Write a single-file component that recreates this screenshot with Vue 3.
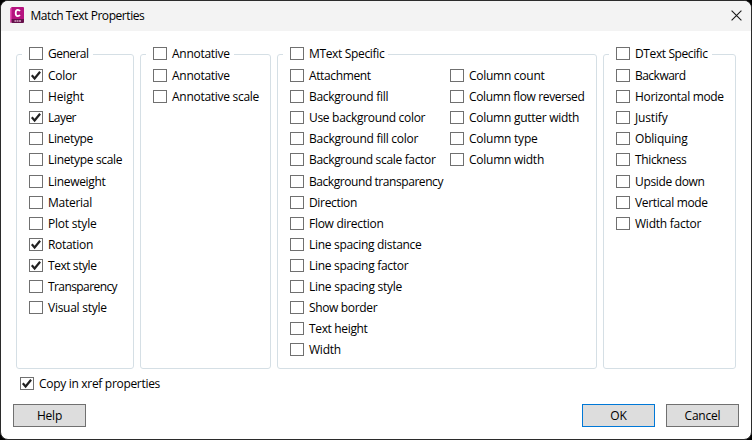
<script setup>
import { reactive } from 'vue'

// Each entry is [name, label width in px, checked]
const make = (rows) => rows.map(([name, width, checked = false]) => ({ name, width, checked }))

const groups = reactive([
  {
    id: 'general',
    title: 'General',
    width: 40.5,
    checked: false,
    columns: [
      make([
        ['Color', 28.5, true],
        ['Height', 36],
        ['Layer', 28, true],
        ['Linetype', 45],
        ['Linetype scale', 74.2],
        ['Lineweight', 57.5],
        ['Material', 44],
        ['Plot style', 48.5],
        ['Rotation', 45, true],
        ['Text style', 48.5, true],
        ['Transparency', 69],
        ['Visual style', 58.7],
      ]),
    ],
  },
  {
    id: 'annotative',
    title: 'Annotative',
    width: 57.7,
    checked: false,
    columns: [make([['Annotative', 57.7], ['Annotative scale', 87]])],
  },
  {
    id: 'mtext',
    title: 'MText Specific',
    width: 75.3,
    checked: false,
    columns: [
      make([
        ['Attachment', 61.7],
        ['Background fill', 79.3],
        ['Use background color', 116.2],
        ['Background fill color', 109.2],
        ['Background scale factor', 126.5],
        ['Background transparency', 134],
        ['Direction', 48],
        ['Flow direction', 74.5],
        ['Line spacing distance', 112.5],
        ['Line spacing factor', 99.3],
        ['Line spacing style', 93],
        ['Show border', 68.2],
        ['Text height', 58.5],
        ['Width', 32],
      ]),
      make([
        ['Column count', 75.5],
        ['Column flow reversed', 115.5],
        ['Column gutter width', 110.2],
        ['Column type', 68.5],
        ['Column width', 75],
      ]),
    ],
  },
  {
    id: 'dtext',
    title: 'DText Specific',
    width: 72.5,
    checked: false,
    columns: [
      make([
        ['Backward', 50.5],
        ['Horizontal mode', 88.7],
        ['Justify', 32.5],
        ['Obliquing', 52.5],
        ['Thickness', 51.5],
        ['Upside down', 69.5],
        ['Vertical mode', 72.7],
        ['Width factor', 66.2],
      ]),
    ],
  },
])
const xref = reactive({ name: 'Copy in xref properties', width: 121, checked: true })

// Tracks a label so that its text fills the given width
const vFit = {
  mounted(el, { value }) {
    el.style.letterSpacing = '0px'
    const natural = el.getBoundingClientRect().width
    el.style.letterSpacing = `${(value - natural) / el.textContent.length}px`
  },
}
</script>

<template>
  <div class="dialog">
    <header class="titlebar">
      <svg class="logo" width="15" height="17" viewBox="0 0 15 17">
        <path d="M0 1.5 2 0v15L0 16z" fill="#e455b4" />
        <path d="M1.5 0H13q1 0 1 1v11H1.5z" fill="#b5127f" />
        <path d="M1.5 12H14v3q0 1-1 1H1.5z" fill="#65104b" />
        <path d="M9.9 4.1Q9.2 2.9 7.8 2.9 5.7 2.9 5.7 6t2.1 3.1q1.4 0 2.1-1.2" fill="none" stroke="#fff" stroke-width="1.8" />
        <path d="M4.5 14h2M7 14h1.5M9 14h2" stroke="#d2a4c4" stroke-width="1.3" />
      </svg>
      <h1 class="title"><span v-fit="113.8">Match Text Properties</span></h1>
      <svg class="close" width="11" height="11" viewBox="0 0 11 11">
        <path d="M.6.6l9.8 9.8M10.4.6.6 10.4" stroke="#1a1a1a" stroke-width="1.1" />
      </svg>
    </header>

    <main class="groups">
      <section v-for="g in groups" :key="g.id" class="group" :class="g.id">
        <div class="legend">
          <label class="check">
            <input v-model="g.checked" type="checkbox" />
            <span class="box"></span>
            <span v-fit="g.width" class="text">{{ g.title }}</span>
          </label>
        </div>
        <div class="columns">
          <div v-for="(col, i) in g.columns" :key="i" class="column">
            <label v-for="item in col" :key="item.name" class="check">
              <input v-model="item.checked" type="checkbox" />
              <span class="box">
                <svg v-if="item.checked" width="12" height="11" viewBox="0 0 12 11">
                  <path d="M1.8 5.3 4.6 8.5 10.1 1.7" fill="none" stroke="#212121" stroke-width="2.2" />
                </svg>
              </span>
              <span v-fit="item.width" class="text">{{ item.name }}</span>
            </label>
          </div>
        </div>
      </section>
    </main>

    <div class="xref">
      <label class="check">
        <input v-model="xref.checked" type="checkbox" />
        <span class="box">
          <svg v-if="xref.checked" width="12" height="11" viewBox="0 0 12 11">
            <path d="M1.8 5.3 4.6 8.5 10.1 1.7" fill="none" stroke="#212121" stroke-width="2.2" />
          </svg>
        </span>
        <span v-fit="xref.width" class="text">{{ xref.name }}</span>
      </label>
    </div>

    <footer class="actions">
      <button class="btn help">Help</button>
      <button class="btn primary">OK</button>
      <button class="btn">Cancel</button>
    </footer>
  </div>
</template>

<style>
body {
  background: #000;
}
</style>

<style scoped>
.dialog {
  box-sizing: border-box;
  width: 752px;
  height: 440px;
  display: flex;
  flex-direction: column;
  overflow: hidden;
  background: #fff;
  border: 1px solid #2b2b2b;
  border-radius: 8px;
  font-family: "Open Sans", "Noto Sans", sans-serif;
  font-size: 12px;
  color: #000;
}
.titlebar {
  box-sizing: border-box;
  height: 30px;
  display: flex;
  align-items: center;
  padding: 0 9px;
  background: #f3f3f3;
}
.logo {
  margin-top: -1px;
}
.title {
  margin: 0 auto 0 5.5px;
  font-size: 12px;
  font-weight: 400;
  line-height: 16px;
}
.close {
  margin: -1px 0 0;
}
.groups {
  display: flex;
  gap: 6px;
  margin: 23px 0 0 15px;
  height: 315px;
}
.group {
  box-sizing: border-box;
  border: 1px solid #d5dfe5;
  border-radius: 3px;
  padding-left: 5px;
}
.general { width: 118px; }
.annotative { width: 131px; }
.mtext { width: 320px; }
.dtext { width: 133px; }
.legend {
  display: flex;
  width: fit-content;
  height: 13px;
  margin-top: -8px;
  padding: 0 4px 0 7px;
  background: #fff;
}
.columns {
  display: flex;
  padding: 9.05px 0 0 7px;
}
.column {
  display: flex;
  flex-direction: column;
  gap: 8.1px;
}
.mtext .column:first-child {
  width: 160px;
}
.check {
  display: flex;
  align-items: center;
  height: 13px;
  white-space: nowrap;
}
.check input {
  display: none;
}
.box {
  box-sizing: border-box;
  flex: none;
  width: 14px;
  height: 13px;
  border: 1px solid #707070;
  background: #fff;
}
.box svg {
  display: block;
}
.text {
  margin-left: 5px;
  line-height: 15px;
}
.xref {
  margin: 8px 0 0 19px;
}
.actions {
  display: flex;
  gap: 11px;
  margin: 14px 12px 0;
}
.btn {
  box-sizing: border-box;
  width: 73px;
  height: 23px;
  padding: 0;
  border: 1px solid #707070;
  background: #ddd;
  font: inherit;
  letter-spacing: -0.2px;
  line-height: 20px;
  color: #000;
}
.help {
  margin-right: auto;
}
.primary {
  border-color: #0078d7;
}
</style>
